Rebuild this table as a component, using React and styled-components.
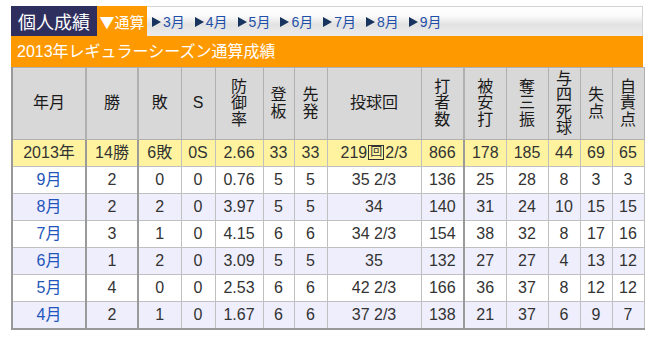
import React from 'react';
import styled, { createGlobalStyle } from 'styled-components';

const GlobalStyle = createGlobalStyle`
  body {
    margin: 0;
    background: #ffffff;
    font-family: "Liberation Sans", "Noto Sans CJK JP", sans-serif;
  }
`;

const Wrapper = styled.div`
  width: 632px;
  padding: 6px 0 0 11px;
`;

const TopBar = styled.div`
  display: flex;
  height: 30px;
`;

const Title = styled.div`
  width: 86px;
  background: #2f2f5f;
  color: #ffffff;
  font-size: 18px;
  line-height: 30px;
  text-align: center;
  font-family: "Noto Sans CJK JP", sans-serif;
`;

const ActiveTab = styled.div`
  width: 50px;
  background: #ff9900;
  color: #ffffff;
  font-size: 15px;
  line-height: 32px;
  text-align: center;
  font-family: "Noto Sans CJK JP", sans-serif;
`;

const TabStrip = styled.div`
  flex: 1;
  display: flex;
  align-items: center;
  gap: 10px;
  padding-left: 5px;
  border-top: 1px solid #d4d4d4;
  border-right: 1px solid #d4d4d4;
  background: linear-gradient(#ffffff 0%, #fbfbfb 30%, #e2e2e2 60%, #ececec 100%);
`;

const Tab = styled.span`
  font-size: 14px;
  line-height: 20px;
  color: #1e4fa8;
  display: flex;
  align-items: center;
`;

const Arrow = styled.span`
  display: inline-block;
  width: 0;
  height: 0;
  border-top: 5px solid transparent;
  border-bottom: 5px solid transparent;
  border-left: 9px solid #17335e;
  margin-right: 2px;
`;

const SeasonBar = styled.div`
  height: 31px;
  background: #ff9900;
  color: #ffffff;
  font-size: 16px;
  line-height: 31px;
  padding-left: 6px;
`;

const Table = styled.table`
  width: 632px;
  table-layout: fixed;
  border-collapse: collapse;
  border-left: 2px solid #999999;
  border-bottom: 2px solid #999999;
  border-right: 1px solid #bbbbbb;
`;

const HeadCell = styled.th`
  height: 71px;
  padding: 0;
  font-weight: normal;
  font-size: 16px;
  line-height: 16.5px;
  color: #1a1a1a;
  text-align: center;
  border: 1px solid #b0b0b0;
  border-left-width: ${(p) => (p.$strong ? '2px' : '1px')};
  background: repeating-linear-gradient(#dedede 0, #dedede 1px, #d2d2d2 1px, #d2d2d2 2px);
`;

const Line = styled.span`
  display: block;
`;

const Cell = styled.td`
  height: 26px;
  padding: 0;
  font-size: 16px;
  line-height: 20px;
  vertical-align: middle;
  text-align: center;
  color: ${(p) => (p.$link ? '#2255bb' : '#333333')};
  border: 1px solid #c0c0c0;
  border-left-width: ${(p) => (p.$strong ? '2px' : '1px')};
  border-left-color: ${(p) => (p.$strong ? '#9a9a9a' : '#c0c0c0')};
  border-top-color: #a0a0a0;
  white-space: nowrap;
`;

const Row = styled.tr`
  background: ${(p) => p.$bg};
`;

const Boxed = styled.span`
  display: inline-block;
  border: 1px solid #333;
  font-size: 12px;
  line-height: 13px;
  padding: 0 1px;
  vertical-align: 2px;
  margin: 0 1px;
`;

const columns = [
  { head: ['年月'], width: 74 },
  { head: ['勝'], width: 52, strong: true },
  { head: ['敗'], width: 43, strong: true },
  { head: ['S'], width: 34 },
  { head: ['防', '御', '率'], width: 48 },
  { head: ['登', '板'], width: 31 },
  { head: ['先', '発'], width: 33 },
  { head: ['投球回'], width: 94 },
  { head: ['打', '者', '数'], width: 43 },
  { head: ['被', '安', '打'], width: 42, strong: true },
  { head: ['奪', '三', '振'], width: 42 },
  { head: ['与', '四', '死', '球'], width: 32 },
  { head: ['失', '点'], width: 32 },
  { head: ['自', '責', '点'], width: 32 },
];

const rows = [
  ['9月', '2', '0', '0', '0.76', '5', '5', '35 2/3', '136', '25', '28', '8', '3', '3'],
  ['8月', '2', '2', '0', '3.97', '5', '5', '34', '140', '31', '24', '10', '15', '15'],
  ['7月', '3', '1', '0', '4.15', '6', '6', '34 2/3', '154', '38', '32', '8', '17', '16'],
  ['6月', '1', '2', '0', '3.09', '5', '5', '35', '132', '27', '27', '4', '13', '12'],
  ['5月', '4', '0', '0', '2.53', '6', '6', '42 2/3', '166', '36', '37', '8', '12', '12'],
  ['4月', '2', '1', '0', '1.67', '6', '6', '37 2/3', '138', '21', '37', '6', '9', '7'],
];

const total = ['2013年', '14勝', '6敗', '0S', '2.66', '33', '33', null, '866', '178', '185', '44', '69', '65'];

const months = ['3月', '4月', '5月', '6月', '7月', '8月', '9月'];

const App = () => (
  <Wrapper>
    <GlobalStyle />
    <TopBar>
      <Title>個人成績</Title>
      <ActiveTab>▼通算</ActiveTab>
      <TabStrip>
        {months.map((m) => (
          <Tab key={m}>
            <Arrow />
            {m}
          </Tab>
        ))}
      </TabStrip>
    </TopBar>
    <SeasonBar>2013年レギュラーシーズン通算成績</SeasonBar>
    <Table>
      <colgroup>
        {columns.map((c, i) => (
          <col key={i} style={{ width: c.width }} />
        ))}
      </colgroup>
      <thead>
        <tr>
          {columns.map((c, i) => (
            <HeadCell key={i} $strong={c.strong}>
              {c.head.map((l) => (
                <Line key={l}>{l}</Line>
              ))}
            </HeadCell>
          ))}
        </tr>
      </thead>
      <tbody>
        <Row $bg="#fff3a0">
          {total.map((v, i) => (
            <Cell key={i} $strong={columns[i].strong}>
              {v === null ? (
                <>
                  219<Boxed>回</Boxed>2/3
                </>
              ) : (
                v
              )}
            </Cell>
          ))}
        </Row>
        {rows.map((r, ri) => (
          <Row key={r[0]} $bg={ri % 2 ? '#eeeefc' : '#ffffff'}>
            {r.map((v, i) => (
              <Cell key={i} $strong={columns[i].strong} $link={i === 0}>
                {v}
              </Cell>
            ))}
          </Row>
        ))}
      </tbody>
    </Table>
  </Wrapper>
);

export default App;
